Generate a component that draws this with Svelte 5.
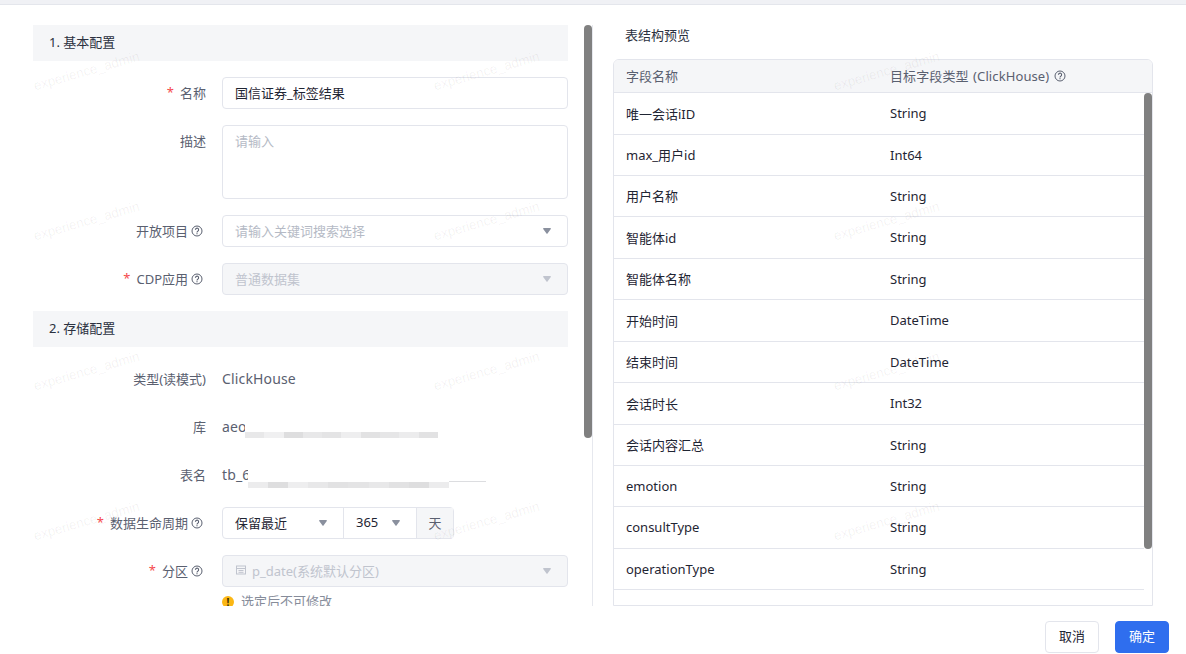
<script>
	const fields = [
		["唯一会话iID", "String", 42],
		["max_用户id", "Int64", 41],
		["用户名称", "String", 41],
		["智能体id", "String", 42],
		["智能体名称", "String", 41],
		["开始时间", "DateTime", 42],
		["结束时间", "DateTime", 41],
		["会话时长", "Int32", 42],
		["会话内容汇总", "String", 41],
		["emotion", "String", 41],
		["consultType", "String", 42],
		["operationType", "String", 41],
		["userId", "Int64", 41]
	];

	const marks = Array.from({ length: 12 });

	// grey levels of the pixelated strip under the masked values
	const dbStrip = [232, 240, 222, 232, 228, 238, 226, 230, 236, 226];
	const tableStrip = [236, 222, 238, 232, 226, 228, 232, 226, 222, 236];
</script>

{#snippet help()}
	<svg class="help" viewBox="0 0 12 12" width="12" height="12" fill="none" stroke="currentColor">
		<circle cx="6" cy="6" r="5" />
		<path d="M4.4 4.8a1.6 1.6 0 1 1 2.5 1.3c-.6.4-.9.6-.9 1.3" stroke-width="1.1" />
		<path d="M6 8.2v1.1" stroke-width="1.2" />
	</svg>
{/snippet}

{#snippet caret()}
	<svg class="caret" viewBox="0 0 8 6" width="8" height="6"><path d="M.8 0h6.4c.6 0 .9.6.6 1L4.5 5.6c-.3.4-.7.4-1 0L.2 1C-.1.6.2 0 .8 0z" fill="currentColor" /></svg>
{/snippet}

<div class="page">
	<div class="topbar"></div>

	<div class="body">
		<div class="left">
			<div class="form">
				<div class="section">1. 基本配置</div>

				<div class="row">
					<div class="label"><i>*</i>名称</div>
					<div class="input value">国信证券_标签结果</div>
				</div>
				<div class="row">
					<div class="label top">描述</div>
					<div class="input area">请输入</div>
				</div>
				<div class="row">
					<div class="label">开放项目{@render help()}</div>
					<div class="input placeholder"><span>请输入关键词搜索选择</span>{@render caret()}</div>
				</div>
				<div class="row">
					<div class="label"><i>*</i>CDP应用{@render help()}</div>
					<div class="input disabled"><span>普通数据集</span>{@render caret()}</div>
				</div>

				<div class="section">2. 存储配置</div>

				<div class="row">
					<div class="label">类型(读模式)</div>
					<div class="text">ClickHouse</div>
				</div>
				<div class="row">
					<div class="label">库</div>
					<div class="text masked">
						<span>aeo</span>
						<div class="mask db">
							{#each dbStrip as g}
								<b style="background: rgb({g},{g},{g + 1})"></b>
							{/each}
						</div>
					</div>
				</div>
				<div class="row">
					<div class="label">表名</div>
					<div class="text masked">
						<span>tb_6</span>
						<div class="mask tb">
							{#each tableStrip as g}
								<b style="background: rgb({g},{g},{g + 1})"></b>
							{/each}
						</div>
					</div>
				</div>
				<div class="row">
					<div class="label"><i>*</i>数据生命周期{@render help()}</div>
					<div class="group">
						<div class="cell keep"><span>保留最近</span>{@render caret()}</div>
						<div class="cell num"><span>365</span>{@render caret()}</div>
						<div class="cell unit">天</div>
					</div>
				</div>
				<div class="row">
					<div class="label"><i>*</i>分区{@render help()}</div>
					<div class="input disabled">
						<span class="partition">
							<svg viewBox="0 0 12 12" width="12" height="12" fill="none" stroke="currentColor">
								<rect x="1.5" y="2" width="9" height="8" />
								<path d="M1.5 4.5h9M3.5 6.5h5M3.5 8.3h5" />
							</svg>
							p_date(系统默认分区)
						</span>
						{@render caret()}
					</div>
				</div>
				<div class="hint">
					<span class="warn">!</span>选定后不可修改
				</div>
			</div>
			<div class="thumb form-thumb"></div>
		</div>

		<div class="right">
			<div class="title">表结构预览</div>
			<div class="table">
				<div class="thead">
					<div>字段名称</div>
					<div class="type-head">目标字段类型 (ClickHouse){@render help()}</div>
				</div>
				<div class="tbody">
					{#each fields as [name, type, height]}
						<div class="tr" style="height: {height}px">
							<div>{name}</div>
							<div>{type}</div>
						</div>
					{/each}
				</div>
				<div class="thumb table-thumb"></div>
			</div>
		</div>
	</div>

	<div class="footer">
		<button class="btn">取消</button>
		<button class="btn primary">确定</button>
	</div>

	<div class="marks">
		{#each marks as _}
			<span>experience_admin</span>
		{/each}
	</div>
</div>

<style>
	:global(body) {
		margin: 0;
		background: #fff;
	}

	.page {
		position: relative;
		width: 1186px;
		height: 654px;
		overflow: hidden;
		font-family: "Noto Sans", "Noto Sans CJK SC", sans-serif;
		font-size: 13px;
		color: #1f2533;
	}

	.topbar {
		height: 4px;
		background: #f0f1f5;
		border-bottom: 1px solid #e4e6ec;
	}

	.body {
		display: flex;
		height: 581px;
		padding-top: 20px;
	}

	.left {
		position: relative;
		width: 592px;
		height: 581px;
		overflow: hidden;
		border-right: 1px solid #e6e8ee;
	}

	.form {
		width: 535px;
		margin-left: 33px;
	}

	.section {
		height: 36px;
		line-height: 34px;
		padding-left: 16px;
		margin-bottom: 16px;
		background: #f5f6f8;
		color: #2b3140;
	}

	.row {
		display: flex;
		margin-bottom: 16px;
		align-items: stretch;
	}

	.label {
		display: flex;
		align-items: center;
		justify-content: flex-end;
		box-sizing: border-box;
		width: 173px;
		height: 32px;
		padding-bottom: 2px;
		margin-right: 16px;
		color: #5a6070;
		white-space: nowrap;
	}

	.label i {
		margin-right: 6px;
		color: #f5484d;
		font-style: normal;
	}

	.help {
		margin: 2px 3px 0;
		color: #5a6070;
	}

	.input {
		display: flex;
		align-items: center;
		justify-content: space-between;
		box-sizing: border-box;
		width: 346px;
		height: 32px;
		padding: 0 16px 2px 12px;
		border: 1px solid #e3e5ec;
		border-radius: 4px;
		background: #fff;
	}

	.area {
		align-items: flex-start;
		height: 74px;
		padding-top: 5px;
		color: #b5bac5;
	}

	.placeholder {
		color: #b5bac5;
	}

	.disabled {
		background: #f5f6f8;
		color: #c0c4ce;
	}

	.caret {
		margin-top: 2px;
		color: #8a909e;
	}

	.disabled .caret {
		color: #c0c4ce;
	}

	.partition {
		display: flex;
		align-items: center;
		gap: 5px;
	}

	.text {
		height: 32px;
		line-height: 32px;
		color: #5a6070;
		font-size: 14px;
		letter-spacing: 0.15px;
	}

	.masked {
		position: relative;
		width: 346px;
	}

	/* covers the end of the value, like the editor's blur in the reference */
	.mask {
		position: absolute;
		display: flex;
		align-items: flex-end;
		background: #fff;
	}

	.mask b {
		flex: 1;
		height: 6px;
	}

	.db {
		top: 9px;
		left: 23px;
		width: 193px;
		height: 18px;
	}

	.tb {
		top: 6px;
		left: 26px;
		width: 238px;
		height: 23px;
		padding-right: 37px;
		box-sizing: border-box;
		background: linear-gradient(#dcdde0, #dcdde0) right 0 bottom 6px / 37px 1px no-repeat, #fff;
	}

	.group {
		display: flex;
		height: 32px;
		box-sizing: border-box;
		border: 1px solid #e3e5ec;
		border-radius: 4px;
	}

	.cell {
		display: flex;
		align-items: center;
		justify-content: space-between;
		box-sizing: border-box;
		height: 30px;
		padding-bottom: 2px;
		border-right: 1px solid #e3e5ec;
	}

	.keep {
		width: 121px;
		padding-left: 12px;
		padding-right: 16px;
	}

	.num {
		width: 73px;
		padding-left: 12px;
		padding-right: 16px;
	}

	.unit {
		width: 36px;
		justify-content: center;
		border-right: 0;
		background: #f5f6f8;
		color: #5a6070;
	}

	.hint {
		display: flex;
		align-items: center;
		gap: 7px;
		margin: -12px 0 0 189px;
		color: #868c9a;
	}

	.warn {
		display: inline-flex;
		align-items: center;
		justify-content: center;
		width: 12px;
		height: 12px;
		margin-top: 2px;
		border-radius: 50%;
		background: #fbb714;
		color: #3a2c00;
		font-size: 10px;
		font-weight: 700;
	}

	.thumb {
		position: absolute;
		width: 8px;
		border-radius: 4px;
		background: #808080;
	}

	.form-thumb {
		top: 0;
		left: 584px;
		height: 413px;
	}

	.right {
		flex: 1;
		min-width: 0;
		padding-left: 20px;
	}

	.title {
		height: 34px;
		padding-left: 12px;
		line-height: 21px;
		color: #2b3140;
	}

	.table {
		position: relative;
		box-sizing: border-box;
		width: 540px;
		height: 547px;
		overflow: hidden;
		border: 1px solid #e3e5ec;
		border-radius: 6px 6px 0 0;
	}

	.thead,
	.tr {
		display: grid;
		grid-template-columns: 264px 1fr;
		align-items: center;
		padding-left: 12px;
	}

	.thead {
		height: 30px;
		padding-bottom: 2px;
		border-bottom: 1px solid #e3e5ec;
		background: #f5f6f8;
		color: #5a6070;
	}

	.type-head {
		display: flex;
		align-items: center;
		letter-spacing: 0.1px;
		word-spacing: 1px;
		white-space: pre;
	}

	.type-head .help {
		margin-left: 5px;
	}

	.tbody {
		width: 530px;
	}

	.tr {
		box-sizing: border-box;
		padding-bottom: 1px;
		border-bottom: 1px solid #e3e5ec;
	}

	.table-thumb {
		top: 33px;
		right: 0;
		height: 456px;
	}

	.footer {
		display: flex;
		justify-content: flex-end;
		gap: 16px;
		padding: 15px 17px 0 0;
	}

	.btn {
		box-sizing: border-box;
		width: 54px;
		height: 32px;
		padding: 0 0 3px;
		border: 1px solid #e3e5ec;
		border-radius: 4px;
		background: #fff;
		color: #1f2533;
		font: inherit;
	}

	.primary {
		border-color: #2f6eee;
		background: #2f6eee;
		color: #fff;
	}

	.marks {
		position: absolute;
		top: 0;
		left: 0;
		display: grid;
		grid-template-columns: repeat(3, 400px);
		grid-auto-rows: 150px;
		pointer-events: none;
	}

	.marks span {
		display: block;
		width: 110px;
		margin: 62px 0 0 42px;
		transform: rotate(-16deg);
		color: rgba(31, 37, 51, 0.065);
		font-family: "Liberation Sans", sans-serif;
		font-size: 13.4px;
		white-space: nowrap;
	}
</style>
